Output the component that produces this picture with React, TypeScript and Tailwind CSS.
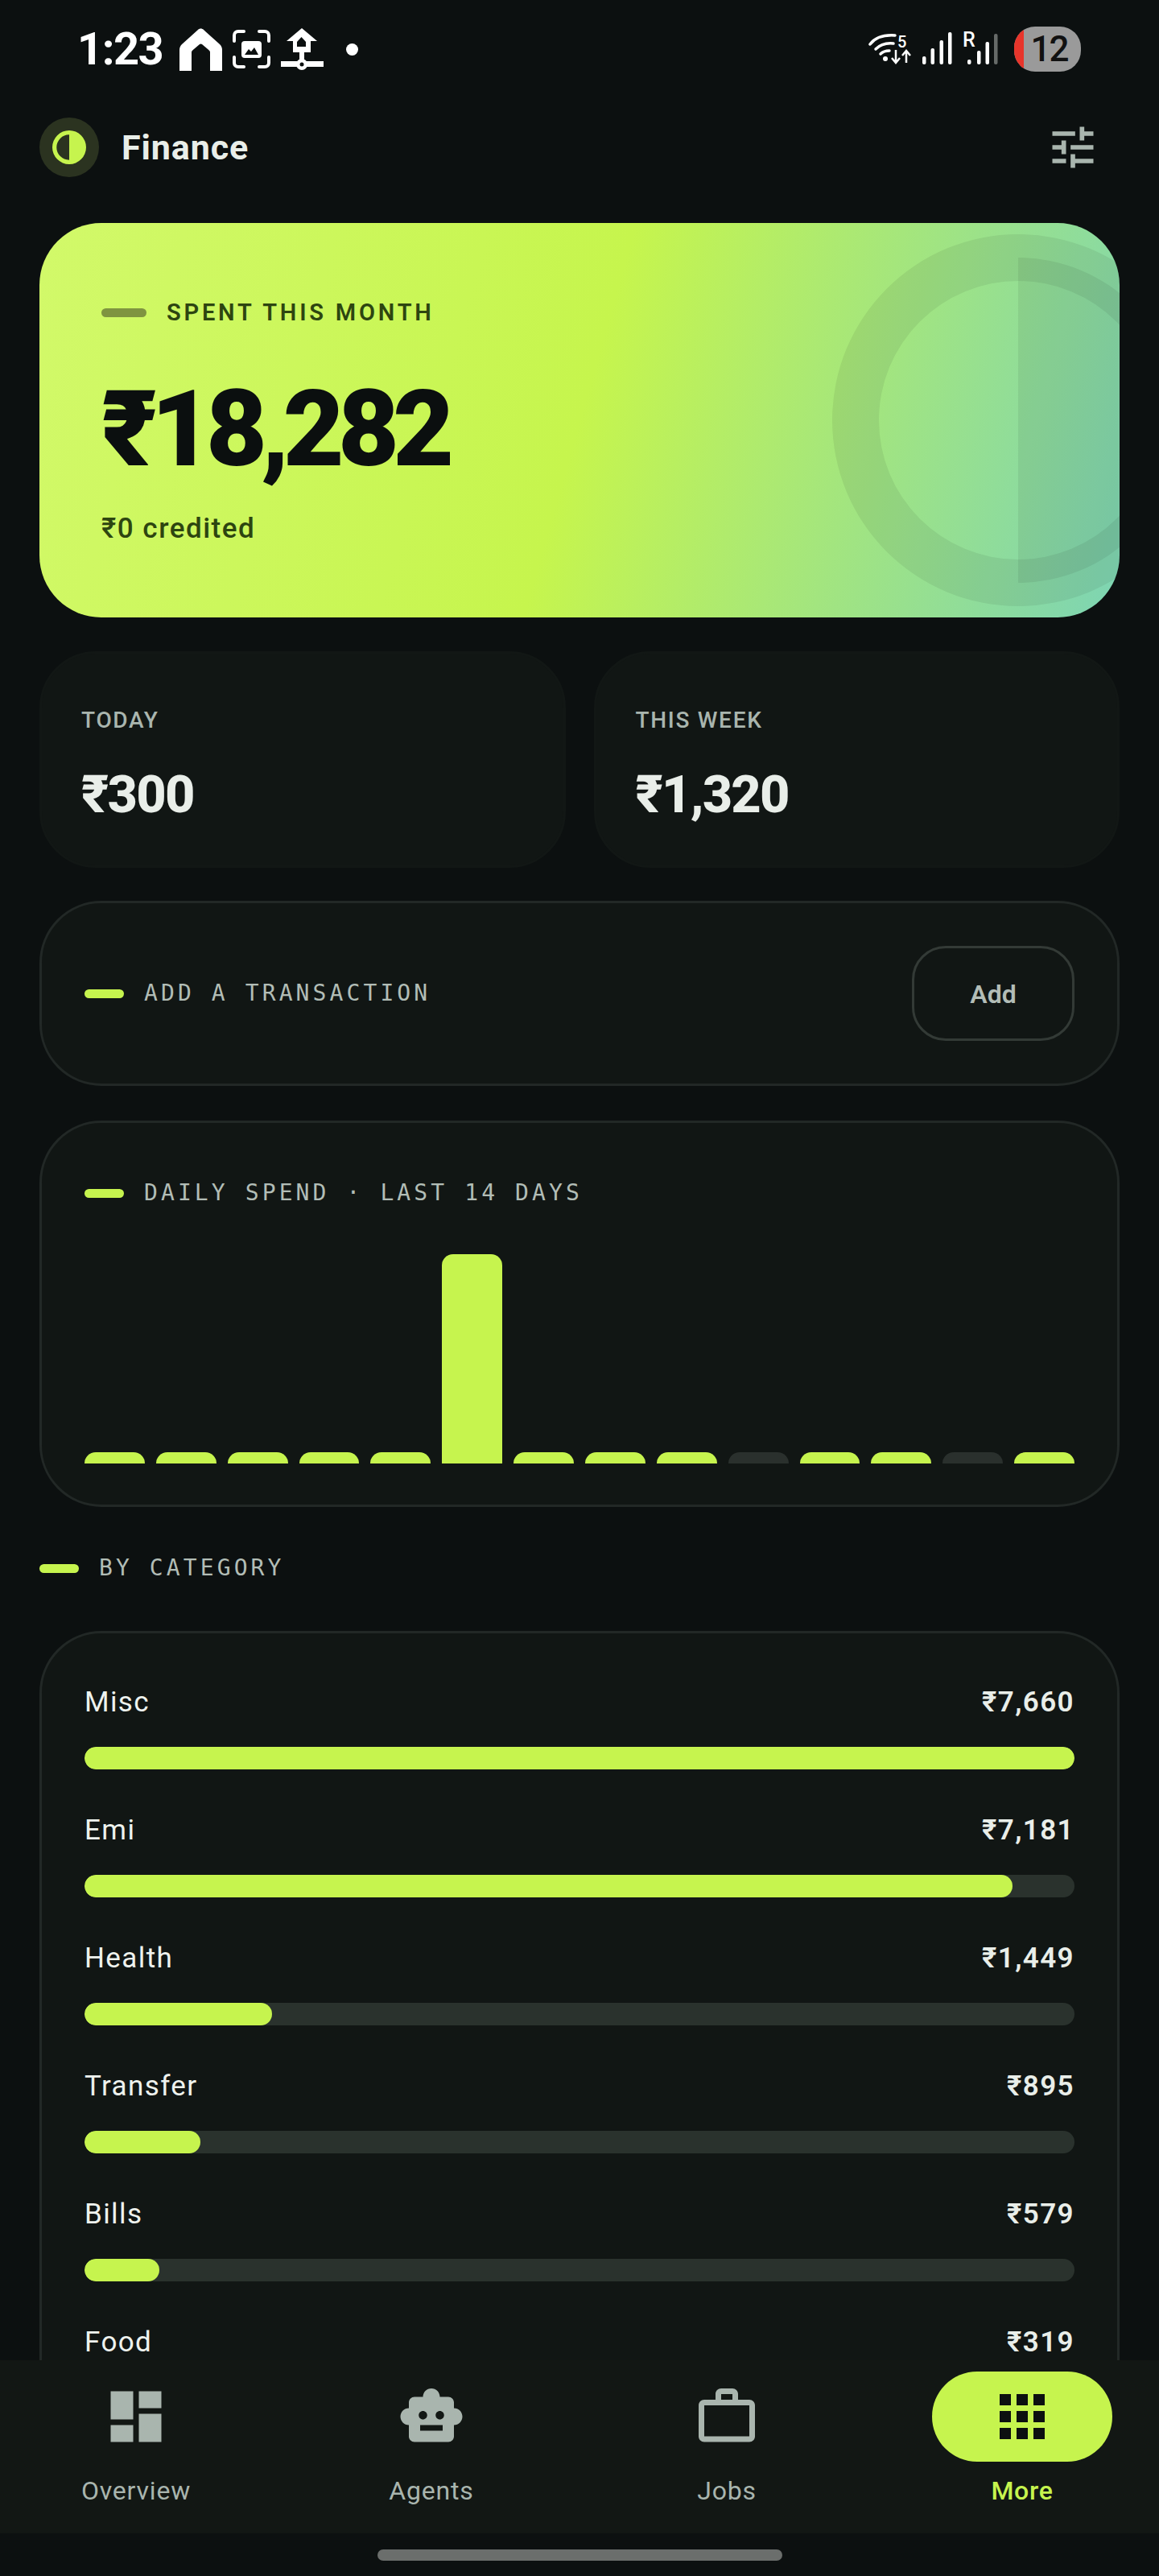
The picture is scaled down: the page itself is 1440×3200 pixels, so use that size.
import type { FC } from "react";
import { MdApps, MdDashboard, MdSmartToy, MdTune, MdWorkOutline } from "react-icons/md";

const sans = "font-['Roboto',sans-serif]";
const mono = "font-['DejaVu_Sans_Mono',monospace]";

const bars = [1, 1, 1, 1, 1, 2, 1, 1, 1, 0, 1, 1, 0, 1];

const categories = [
  { name: "Misc", amount: 7660 },
  { name: "Emi", amount: 7181 },
  { name: "Health", amount: 1449 },
  { name: "Transfer", amount: 895 },
  { name: "Bills", amount: 579 },
  { name: "Food", amount: 319 },
];

const formatRupees = (value: number) => "₹" + value.toLocaleString("en-IN");

const HomeGlyph = () => (
  <svg width="53" height="53" viewBox="0 0 53 53" className="text-white">
    <path
      fill="currentColor"
      fillRule="evenodd"
      d="M0 53V27c0-3 1-5 3-7L23 2c2-2 5-2 7 0l20 18c2 2 3 4 3 7v26H38V30c0-1-.5-2-1.500-2.800L28 20c-1-.8-2-.8-3 0l-8.500 7.200C15.500 28 15 29 15 30v23z"
    />
  </svg>
);

const ScanGlyph = () => (
  <svg width="47" height="48" viewBox="0 0 47 48" fill="none" className="text-white">
    <g stroke="currentColor" strokeWidth="4" strokeLinecap="round">
      <path d="M2 14V7c0-3 2-5 5-5h7" />
      <path d="M33 2h7c3 0 5 2 5 5v7" />
      <path d="M2 34v7c0 3 2 5 5 5h7" />
      <path d="M33 46h7c3 0 5-2 5-5v-7" />
    </g>
    <rect x="11" y="14" width="25" height="21" rx="4" fill="currentColor" />
    <path d="M15 31l5-7 3 3 4-5 5 9z" fill="#0c1010" />
  </svg>
);

const BirdhouseGlyph = () => (
  <svg width="53" height="52" viewBox="0 0 53 52" className="text-white">
    <path
      fill="currentColor"
      fillRule="evenodd"
      d="M26 0l19 16h-8v14H29v11h-6V30h-8V16H7zM20 17v6h11v-6l-5.500-6z"
    />
    <rect x="0" y="41" width="53" height="7" fill="currentColor" />
    <circle cx="26" cy="45" r="7" fill="currentColor" />
    <circle cx="26" cy="45" r="2.500" fill="#0c1010" />
  </svg>
);

const WifiGlyph = () => (
  <svg width="54" height="40" viewBox="0 0 54 40" fill="none" className="text-white">
    <g stroke="currentColor" strokeWidth="3.500" strokeLinecap="round">
      <path d="M2 14C8 6 18 2 33 3" />
      <path d="M9 20c5-5 12-8 22-7" />
      <path d="M15 26c3-3 7-4 11-4" />
    </g>
    <circle cx="21" cy="32" r="3" fill="currentColor" />
    <text x="36" y="18" fontSize="20" fontWeight="500" fill="currentColor" fontFamily="Roboto, sans-serif">
      5
    </text>
    <g stroke="currentColor" strokeWidth="2.500">
      <path d="M34 21v15M29 31l5 6 5-6" />
      <path d="M47 37V23M42 28l5-6 5 6" />
    </g>
  </svg>
);

const SignalGlyph = ({ roaming }: { roaming?: boolean }) => {
  const xs = roaming ? [6, 18, 28.500, 39] : [0, 10.500, 21.500, 32];
  const tops = roaming ? [34, 23, 12, 2] : [30, 20, 10, 0];
  return (
    <svg width={roaming ? 44 : 37} height={roaming ? 55 : 42} viewBox={roaming ? "0 -6 44 55" : "0 0 37 42"} className="text-white">
      {xs.map((x, i) => (
        <rect
          key={x}
          x={x}
          y={tops[i]}
          width="4.500"
          height={40 - tops[i]}
          rx="2"
          fill={roaming && i === 3 ? "#666a68" : "currentColor"}
        />
      ))}
      {roaming && (
        <text x="0" y="17.500" fontSize="25" fontWeight="500" fill="currentColor" fontFamily="Roboto, sans-serif">
          R
        </text>
      )}
    </svg>
  );
};

// half-filled circle mark, used small in the header and big behind the hero
const Mark: FC<{ className: string }> = ({ className }) => (
  <svg viewBox="0 0 462 462" className={className} fill="none">
    <g className="[fill:currentColor]">
      <path
        fillRule="evenodd"
        d="M231 0a231 231 0 1 0 0 462a231 231 0 1 0 0-462zM231 58a173 173 0 1 1 0 346a173 173 0 1 1 0-346z"
      />
      <path d="M231 29a202 202 0 0 1 0 404z" />
    </g>
  </svg>
);

const SectionLabel: FC<{ text: string }> = ({ text }) => (
  <div className="flex h-[34px] items-center gap-[25px]">
    <span className="h-[11px] w-[49px] rounded-full bg-[#c6f44e]" />
    <span className={`${mono} whitespace-pre text-[28px] leading-[34px] tracking-[4.100px] text-[#b2bdb6]`}>{text}</span>
  </div>
);

const StatCard: FC<{ label: string; value: string }> = ({ label, value }) => (
  <div className="h-[269px] rounded-[70px] border-[3px] border-[#121715] bg-[#111614] pl-[49px] pt-[62px]">
    <div className="text-[28px] font-medium leading-[42px] tracking-[1.700px] text-[#a9b5ae]">{label}</div>
    <div className="mt-[33px] text-[65px] font-extrabold leading-[76px] tracking-[-1.800px] text-[#e9eee9]">{value}</div>
  </div>
);

const CategoryRow: FC<{ name: string; amount: number }> = ({ name, amount }) => (
  <div>
    <div className="flex h-[42px] items-center justify-between pt-[2px] text-[35px] leading-[42px] tracking-[1.400px]">
      <span className="text-[#eef2ee]">{name}</span>
      <span className="font-semibold text-[#e9eee9]">{formatRupees(amount)}</span>
    </div>
    <div className="mt-[35px] h-[28px] overflow-hidden rounded-full bg-[#2a322d]">
      <div className="h-full rounded-full bg-[#c6f44e]" style={{ width: `${(amount / 7660) * 100}%` }} />
    </div>
  </div>
);

const navItems = [
  { label: "Overview", Icon: MdDashboard },
  { label: "Agents", Icon: MdSmartToy },
  { label: "Jobs", Icon: MdWorkOutline },
  { label: "More", Icon: MdApps, active: true },
];

const App = () => {
  return (
    <div className={`${sans} flex h-[3200px] w-[1440px] flex-col overflow-hidden bg-[#0c1010]`}>
      <div className="min-h-0 flex-1 overflow-hidden">
        {/* status bar */}
        <div className="flex h-[146px] items-start justify-between pl-[96px] pr-[97px] pt-[33px]">
          <div className="flex h-[56px] items-center">
            <span className="text-[56px] font-bold leading-[56px] tracking-[-1.500px] text-white">1:23</span>
            <div className="ml-[21px]"><HomeGlyph /></div>
            <div className="ml-[13px]"><ScanGlyph /></div>
            <div className="ml-[13px]"><BirdhouseGlyph /></div>
            <span className="ml-[28px] h-[15px] w-[15px] rounded-full bg-white" />
          </div>
          <div className="flex h-[56px] items-center">
            <WifiGlyph />
            <div className="ml-[13px]"><SignalGlyph /></div>
            <div className="ml-[13px]"><SignalGlyph roaming /></div>
            <div className="ml-[20px] flex h-[56px] w-[83px] overflow-hidden rounded-[26px] bg-[#9a9a9a]">
              <span className="h-full w-[12px] bg-[#e8352b]" />
              <span className="flex-1 pr-[8px] text-center text-[44px] font-medium leading-[56px] tracking-[-2px] text-[#111]">12</span>
            </div>
          </div>
        </div>

        {/* header */}
        <div className="flex h-[74px] items-center justify-between pl-[49px] pr-[73px]">
          <div className="flex items-center gap-[28px]">
            <div className="flex h-[74px] w-[74px] items-center justify-center rounded-full bg-[#2b3320]">
              <Mark className="h-[42px] w-[42px] text-[#c6f44e]" />
            </div>
            <span className="text-[43px] font-bold leading-[50px] tracking-[0.900px] text-[#e9eee9]">Finance</span>
          </div>
          <MdTune className="h-[68px] w-[68px] text-[#a9b5ae]" />
        </div>

        <div className="px-[49px] pt-[57px]">
          {/* hero */}
          <div className="relative h-[490px] overflow-hidden rounded-[77px] bg-[linear-gradient(106deg,#d2f96a_0%,#c6f54d_50%,#7dd4b4_100%)] pl-[77px] pt-[90px]">
            <Mark className="absolute left-[985px] top-[14px] h-[462px] w-[462px] text-[#0c1010]/[0.07]" />
            <div className="relative flex h-[42px] items-center gap-[25px]">
              <span className="h-[11px] w-[56px] rounded-full bg-[#7f9440]" />
              <span className="text-[29px] font-semibold leading-[42px] tracking-[3.800px] text-[#2d4510]">SPENT THIS MONTH</span>
            </div>
            <div className="relative mt-[54px] text-[131px] font-black leading-[140px] tracking-[-7.700px] text-[#0b0f0f]">₹18,282</div>
            <div className="relative mt-[33px] text-[35px] font-medium leading-[42px] tracking-[1.500px] text-[#2d4510]">₹0 credited</div>
          </div>

          {/* today and week */}
          <div className="mt-[42px] grid grid-cols-2 gap-[35px]">
            <StatCard label="TODAY" value="₹300" />
            <StatCard label="THIS WEEK" value="₹1,320" />
          </div>

          {/* add */}
          <div className="mt-[41px] flex h-[230px] items-center justify-between rounded-[77px] border-[3px] border-[#222826] bg-[#111614] pl-[53px] pr-[53px]">
            <SectionLabel text="ADD A TRANSACTION" />
            <button className="h-[118px] w-[202px] rounded-[42px] border-[3.500px] border-[#333a36] pt-[2px] text-[32px] font-semibold text-[#b3bdb7]">Add</button>
          </div>

          {/* daily chart */}
          <div className="mt-[43px] h-[480px] rounded-[77px] border-[3px] border-[#222826] bg-[#111614] pl-[53px] pr-[53px] pt-[70px]">
            <SectionLabel text="DAILY SPEND · LAST 14 DAYS" />
            <div className="mt-[59px] flex h-[260px] items-end gap-[14px]">
              {bars.map((kind, i) => (
                <div
                  key={i}
                  className={
                    kind === 2
                      ? "h-[260px] flex-1 rounded-t-[14px] bg-[#c6f44e]"
                      : kind === 1
                        ? "h-[14px] flex-1 rounded-t-[14px] bg-[#c6f44e]"
                        : "h-[14px] flex-1 rounded-t-[14px] bg-[#2a302d]"
                  }
                />
              ))}
            </div>
          </div>

          <div className="mt-[59px]">
            <SectionLabel text="BY CATEGORY" />
          </div>

          {/* categories, runs on under the nav bar */}
          <div className="mt-[61px] rounded-[77px] border-[3px] border-[#222826] bg-[#111614] pb-[56px] pl-[53px] pr-[53px] pt-[64px]">
            <div className="flex flex-col gap-[54px]">
              {categories.map((c) => (
                <CategoryRow key={c.name} name={c.name} amount={c.amount} />
              ))}
            </div>
          </div>
        </div>
      </div>

      {/* bottom nav */}
      <div className="flex h-[215px] shrink-0 justify-between bg-[#121714] pl-[57px] pr-[58px] pt-[14px]">
        {navItems.map(({ label, Icon, active }) => (
          <div key={label} className="flex w-[224px] flex-col items-center">
            <div className={active ? "flex h-[112px] w-[224px] items-center justify-center rounded-full bg-[#c6f44e]" : "flex h-[112px] w-[224px] items-center justify-center"}>
              <Icon className={active ? "h-[84px] w-[84px] text-[#0c1010]" : "h-[84px] w-[84px] text-[#a9b5ae]"} />
            </div>
            <span className={active ? "mt-[15px] text-[32px] font-medium leading-[42px] tracking-[0.700px] text-[#c6f44e]" : "mt-[15px] text-[32px] leading-[42px] tracking-[0.800px] text-[#a9b5ae]"}>
              {label}
            </span>
          </div>
        ))}
      </div>

      {/* gesture handle */}
      <div className="flex h-[53px] shrink-0 justify-center pt-[20px]">
        <div className="h-[14px] w-[503px] rounded-full bg-[#6b6e6c]" />
      </div>
    </div>
  );
};

export default App;
